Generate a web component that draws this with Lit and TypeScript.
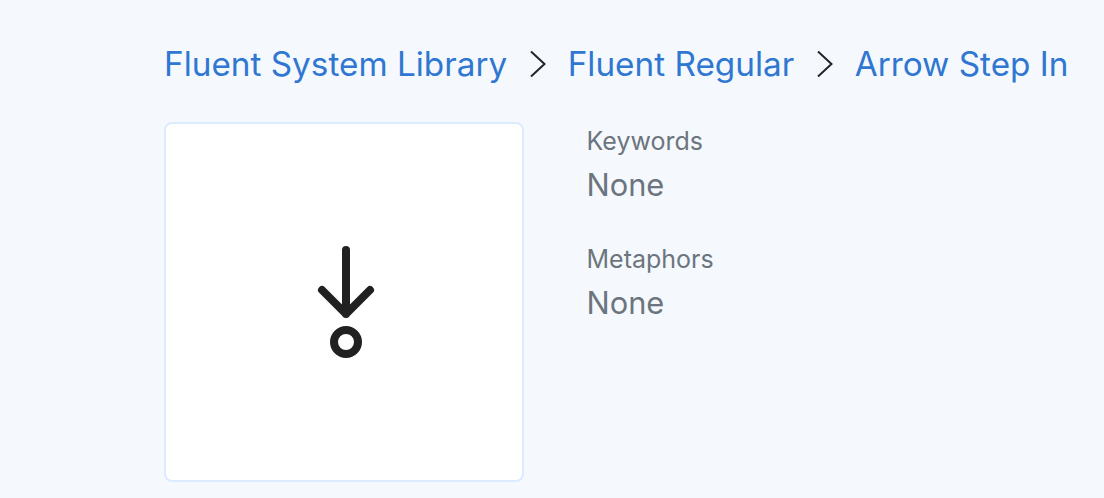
import { LitElement, html, css } from "lit";
import { customElement } from "lit/decorators.js";

@customElement("app-root")
export class AppRoot extends LitElement {
  static styles = css`
    :host { display: block; height: 498px; overflow: hidden; background: #f5f9fe; font-family: Inter, "Liberation Sans", sans-serif; }
    .page { padding: 42px 0 0 164px; display: flex; flex-direction: column; gap: 36px; }
    .crumbs { display: flex; align-items: center; height: 44px; font-size: 33.3px; line-height: 44px; color: #2f77d1; white-space: nowrap; }
    .crumbs a { color: inherit; text-decoration: none; }
    .sep { width: 16px; height: 28px; margin: 0 21.5px 0 23px; flex: none; }
    .body { display: flex; gap: 62.5px; }
    .card { width: 356px; height: 356px; border: 2px solid #dcebfd; border-radius: 8px; background: #fff; display: flex; align-items: center; justify-content: center; }
    .info { display: flex; flex-direction: column; gap: 38px; padding-top: 1px; }
    .field { display: flex; flex-direction: column; gap: 8px; }
    .label { font-size: 25px; line-height: 36px; color: #6c757d; }
    .value { font-size: 30.8px; line-height: 36px; color: #6c757d; }
    svg.icon { display: block; margin-left: 4px; }
  `;

  render() {
    const sep = html`<svg class="sep" viewBox="0 0 16 28" fill="none" stroke="#212529" stroke-width="2"><path d="M1 1.5 14.5 14 1 26.5"/></svg>`;
    return html`
      <div class="page">
        <nav class="crumbs">
          <a href="#">Fluent System Library</a>${sep}
          <a href="#">Fluent Regular</a>${sep}
          <a href="#">Arrow Step In</a>
        </nav>
        <div class="body">
          <div class="card">
            <svg class="icon" width="64" height="120" viewBox="0 0 64 120" fill="none" stroke="#212121" stroke-width="8" stroke-linecap="round" stroke-linejoin="round">
              <path d="M32 8V72M8 48 32 72 56 48"/>
              <circle cx="32" cy="100" r="12"/>
            </svg>
          </div>
          <div class="info">
            <div class="field"><div class="label">Keywords</div><div class="value">None</div></div>
            <div class="field"><div class="label">Metaphors</div><div class="value">None</div></div>
          </div>
        </div>
      </div>
    `;
  }
}
